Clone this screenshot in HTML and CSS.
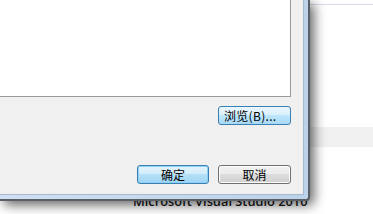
FILE: index.html
```html
<!DOCTYPE html>
<html>
<head>
<meta charset="utf-8">
<link rel="stylesheet" href="styles.css">
</head>
<body>
<div class="desktop">
  <div class="bg-line"></div>
  <div class="bg-band"></div>
  <div class="caption">Microsoft Visual Studio 2010</div>
  <div class="window">
    <div class="frame">
      <div class="content">
        <div class="list"></div>
        <div class="browse-row">
          <button class="btn btn-hot">浏览(B)...</button>
        </div>
        <div class="footer">
          <button class="btn btn-default btn-ok">确定</button>
          <button class="btn btn-normal">取消</button>
        </div>
      </div>
    </div>
  </div>
</div>
</body>
</html>
```
FILE: styles.css
```css
html, body {
  margin: 0;
  padding: 0;
  background: #ffffff;
  overflow: hidden;
}
.desktop {
  position: relative;
  width: 373px;
  height: 214px;
  overflow: hidden;
  font-family: "Noto Sans CJK SC", "Liberation Sans", sans-serif;
}
.bg-line {
  position: absolute;
  left: 0;
  top: 4px;
  width: 373px;
  height: 1px;
  background: #d9dce6;
}
.bg-band {
  position: absolute;
  left: 0;
  top: 127px;
  width: 373px;
  height: 20px;
  background: #f0f0f0;
}
.caption {
  position: absolute;
  left: 133px;
  top: 192px;
  font-family: "Open Sans", "Liberation Sans", sans-serif;
  font-size: 12.8px;
  font-weight: 600;
  line-height: 18px;
  color: #1a1a1a;
  white-space: nowrap;
}
.window {
  position: relative;
  width: 308px;
  height: 199px;
  border-right: 2px solid #5a5f66;
  border-bottom: 2px solid #5a5f66;
  border-bottom-right-radius: 4px;
  box-shadow: 4px 4px 12px rgba(0, 0, 0, 0.6);
  background: #c5d9ee;
}
.frame {
  box-sizing: border-box;
  width: 308px;
  height: 199px;
  padding-right: 4px;
  padding-bottom: 4px;
  background: linear-gradient(to right, #cfe0f2, #bcd2ea);
  border-bottom-right-radius: 3px;
}
.content {
  box-sizing: border-box;
  width: 304px;
  height: 195px;
  background: #f0f0f0;
  border-right: 1px solid #a6b9ce;
  border-bottom: 1px solid #a6b9ce;
  padding-right: 12px;
  padding-bottom: 10px;
  display: flex;
  flex-direction: column;
}
.list {
  box-sizing: border-box;
  width: 291px;
  height: 97px;
  background: #ffffff;
  border-right: 1px solid #9a9a9a;
  border-bottom: 1px solid #9a9a9a;
}
.browse-row {
  display: flex;
  justify-content: flex-end;
  margin-top: 9px;
}
.footer {
  display: flex;
  justify-content: flex-end;
  gap: 9px;
  margin-top: auto;
}
.btn {
  box-sizing: border-box;
  width: 73px;
  height: 19px;
  margin: 0;
  padding: 0;
  border-radius: 3px;
  font-family: "Noto Sans CJK SC", "Liberation Sans", sans-serif;
  font-size: 12px;
  line-height: 15px;
  color: #000;
  text-align: center;
  cursor: default;
}
.btn-hot {
  border: 1px solid #3c7fb1;
  background: linear-gradient(to bottom, #eaf6fd 0%, #d9f0fc 45%, #bee6fd 50%, #a7d9f5 100%);
  text-align: left;
  padding-left: 5px;
  letter-spacing: 0.3px;
}
.btn-ok {
  width: 72px;
}
.btn-default {
  border: 1px solid #3c7fb1;
  background: linear-gradient(to bottom, #e5f4fc 0%, #d2ecfa 45%, #b6e0f8 50%, #9fd4f3 100%);
  box-shadow: inset 0 0 0 1px #8ed1f6;
}
.btn-normal {
  border: 1px solid #707070;
  background: linear-gradient(to bottom, #f2f2f2 0%, #ebebeb 45%, #dddddd 50%, #cfcfcf 100%);
  box-shadow: inset 0 0 0 1px #fcfcfc;
}
```
